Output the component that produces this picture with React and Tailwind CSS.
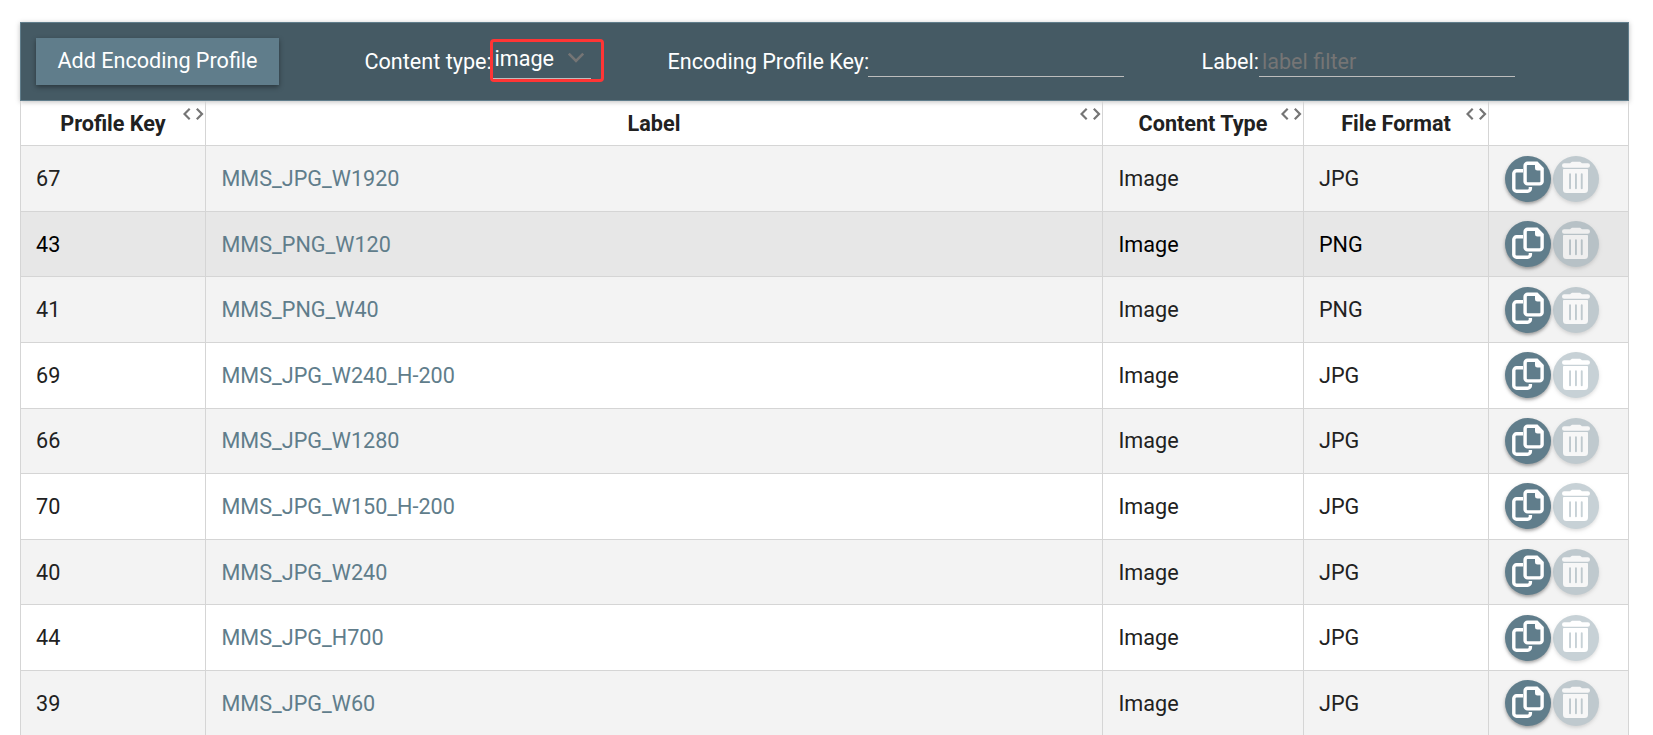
import React from "react";

const rows = [
  { key: "67", label: "MMS_JPG_W1920", format: "JPG", row: "h-[66px] bg-[#f3f3f3]", text: "pt-[17px]", icons: "pt-[10px]", glyph: "pt-0" },
  { key: "43", label: "MMS_PNG_W120", format: "PNG", row: "h-[65px] bg-[#e7e7e7] text-black", text: "pt-[17px]", icons: "pt-[9px]", glyph: "pt-[1px]" },
  { key: "41", label: "MMS_PNG_W40", format: "PNG", row: "h-[66px] bg-[#f3f3f3]", text: "pt-[17px]", icons: "pt-[10px]", glyph: "pt-0" },
  { key: "69", label: "MMS_JPG_W240_H-200", format: "JPG", row: "h-[66px] bg-white", text: "pt-[17px]", icons: "pt-[9px]", glyph: "pt-[1px]" },
  { key: "66", label: "MMS_JPG_W1280", format: "JPG", row: "h-[65px] bg-[#f3f3f3]", text: "pt-[16px]", icons: "pt-[9px]", glyph: "pt-[1px]" },
  { key: "70", label: "MMS_JPG_W150_H-200", format: "JPG", row: "h-[66px] bg-white", text: "pt-[17px]", icons: "pt-[9px]", glyph: "pt-[1px]" },
  { key: "40", label: "MMS_JPG_W240", format: "JPG", row: "h-[65px] bg-[#f3f3f3]", text: "pt-[17px]", icons: "pt-[9px]", glyph: "pt-[1px]" },
  { key: "44", label: "MMS_JPG_H700", format: "JPG", row: "h-[66px] bg-white", text: "pt-[17px]", icons: "pt-[10px]", glyph: "pt-0" },
  { key: "39", label: "MMS_JPG_W60", format: "JPG", row: "h-[66px] bg-[#f3f3f3]", text: "pt-[17px]", icons: "pt-[9px]", glyph: "pt-[1px]" },
];

const columns = "grid grid-cols-[185px_897px_201px_185px_140px]";
const cell = "border-r border-b border-[#d5d5d5]";

function Resizer() {
  return (
    <svg className="absolute top-[7px] right-[1px] h-[12px] w-[21px]" viewBox="0 0 21 12" fill="none" stroke="#757575" strokeWidth="2.2">
      <path d="M6.7 0.8 1.5 6l5.2 5.2M13.8 0.8 19 6l-5.2 5.2" />
    </svg>
  );
}

function HeaderCell({ children, resizable = true }) {
  return (
    <div className={`relative pt-[7px] text-center font-bold leading-[32px] ${cell}`}>
      {children}
      {resizable && <Resizer />}
    </div>
  );
}

function CopyButton({ glyph }) {
  return (
    <button className={`flex size-[46px] rounded-full bg-[#607d8b] shadow-[0_2px_3px_rgba(0,0,0,0.25),0_2px_5px_rgba(0,0,0,0.12)] ${glyph}`}>
      <svg className="size-[46px] shrink-0" viewBox="0 0 46 46" fill="none" stroke="white" strokeWidth="3.4">
        <path d="M18 14.8h-6.4a2.8 2.8 0 0 0-2.8 2.8v14.8a2.8 2.8 0 0 0 2.8 2.8h11a2.8 2.8 0 0 0 2.8-2.8V31" />
        <path d="M22.6 7.3h9.2l5.3 5.3v12.8a2.5 2.5 0 0 1-2.5 2.5H22.6a2.5 2.5 0 0 1-2.5-2.5V9.8a2.5 2.5 0 0 1 2.5-2.5z" />
        <path d="M30 6.5h2l6 5.8v2.2h-5.5a2.5 2.5 0 0 1-2.5-2.5z" fill="white" stroke="none" />
      </svg>
    </button>
  );
}

function DeleteButton({ glyph }) {
  return (
    <button disabled className={`flex size-[46px] rounded-full bg-[#607d8b] opacity-35 shadow-[0_2px_3px_rgba(0,0,0,0.25),0_2px_5px_rgba(0,0,0,0.12)] ${glyph}`}>
      <svg className="size-[46px] shrink-0" viewBox="0 0 46 46" fill="white">
        <path d="M11.2 7.3h5.9c.6-1 1.6-1.6 2.7-1.6h6.4c1.1 0 2.1.6 2.7 1.6h5.9a2.2 2.2 0 0 1 0 4.4H11.2a2.2 2.2 0 0 1 0-4.4z" />
        <path fillRule="evenodd" d="M10.8 13h23.4a.8.8 0 0 1 .8.8v19.7a3.5 3.5 0 0 1-3.5 3.5h-18a3.5 3.5 0 0 1-3.5-3.5V13.8a.8.8 0 0 1 .8-.8zM16.1 18.3v14a.9.9 0 0 0 1.9 0v-14a.9.9 0 0 0-1.9 0zM22 18.3v14a.9.9 0 0 0 1.9 0v-14a.9.9 0 0 0-1.9 0zM27.8 18.3v14a.9.9 0 0 0 1.9 0v-14a.9.9 0 0 0-1.9 0z" />
      </svg>
    </button>
  );
}

export default function App() {
  return (
    <div className="h-[735px] overflow-hidden bg-white pt-[22px] pl-[20px] font-['Roboto',sans-serif] text-[21.6px] text-[#212121]">
      <div className="flex h-[79px] w-[1609px] border border-[#607d8b] bg-[#455a64] pl-[15px] text-white shadow-[0_1px_5px_rgba(0,0,0,0.25)]">
        <button className="mt-[15px] h-[47px] w-[243px] bg-[#607d8b] pb-[2px] leading-[45px] shadow-[0_2px_5px_rgba(0,0,0,0.4)]">
          Add Encoding Profile
        </button>
        <label className="mt-[23px] ml-[85.5px] w-[125.5px] leading-[32px] whitespace-nowrap">Content type:</label>
        <div className="mt-[16px] flex h-[43px] w-[114px] rounded-[4px] border-[3px] border-[#ff3535]">
          <div className="flex h-[37px] w-[98px] justify-between border-b border-[#bdbdbd] pl-[1.5px] leading-[34px]">
            image
            <svg className="mt-[10px] mr-[6px] h-[12px] w-[18px]" viewBox="0 0 18 12" fill="none" stroke="#757575" strokeWidth="2.6">
              <path d="M1.8 1.7 9 9l7.2-7.3" />
            </svg>
          </div>
        </div>
        <label className="mt-[23px] ml-[63.5px] w-[200.5px] leading-[32px] whitespace-nowrap">Encoding Profile Key:</label>
        <input className="mt-[22px] h-[32px] w-[256px] border-b border-[#bdbdbd] bg-transparent" />
        <label className="mt-[23px] ml-[77.5px] w-[57.5px] leading-[32px] whitespace-nowrap">Label:</label>
        <input
          placeholder="label filter"
          className="mt-[22px] h-[32px] w-[256px] border-b border-[#bdbdbd] bg-transparent pt-[3px] pl-[3px] placeholder:text-[#757575]"
        />
      </div>
      <div className="w-[1609px] border-l border-[#d5d5d5]">
        <div className={`h-[45px] ${columns}`}>
          <HeaderCell>Profile Key</HeaderCell>
          <HeaderCell>Label</HeaderCell>
          <HeaderCell>Content Type</HeaderCell>
          <HeaderCell>File Format</HeaderCell>
          <HeaderCell resizable={false} />
        </div>
        {rows.map((r) => (
          <div key={r.key} className={`${columns} ${r.row}`}>
            <div className={`pl-[15px] leading-[32px] ${r.text} ${cell}`}>{r.key}</div>
            <div className={`pl-[15.5px] leading-[32px] text-[#607d8b] ${r.text} ${cell}`}>{r.label}</div>
            <div className={`pl-[15.5px] leading-[32px] ${r.text} ${cell}`}>Image</div>
            <div className={`pl-[15px] leading-[32px] ${r.text} ${cell}`}>{r.format}</div>
            <div className={`flex gap-[2px] pl-[16px] ${r.icons} ${cell}`}>
              <CopyButton glyph={r.glyph} />
              <DeleteButton glyph={r.glyph} />
            </div>
          </div>
        ))}
      </div>
    </div>
  );
}
